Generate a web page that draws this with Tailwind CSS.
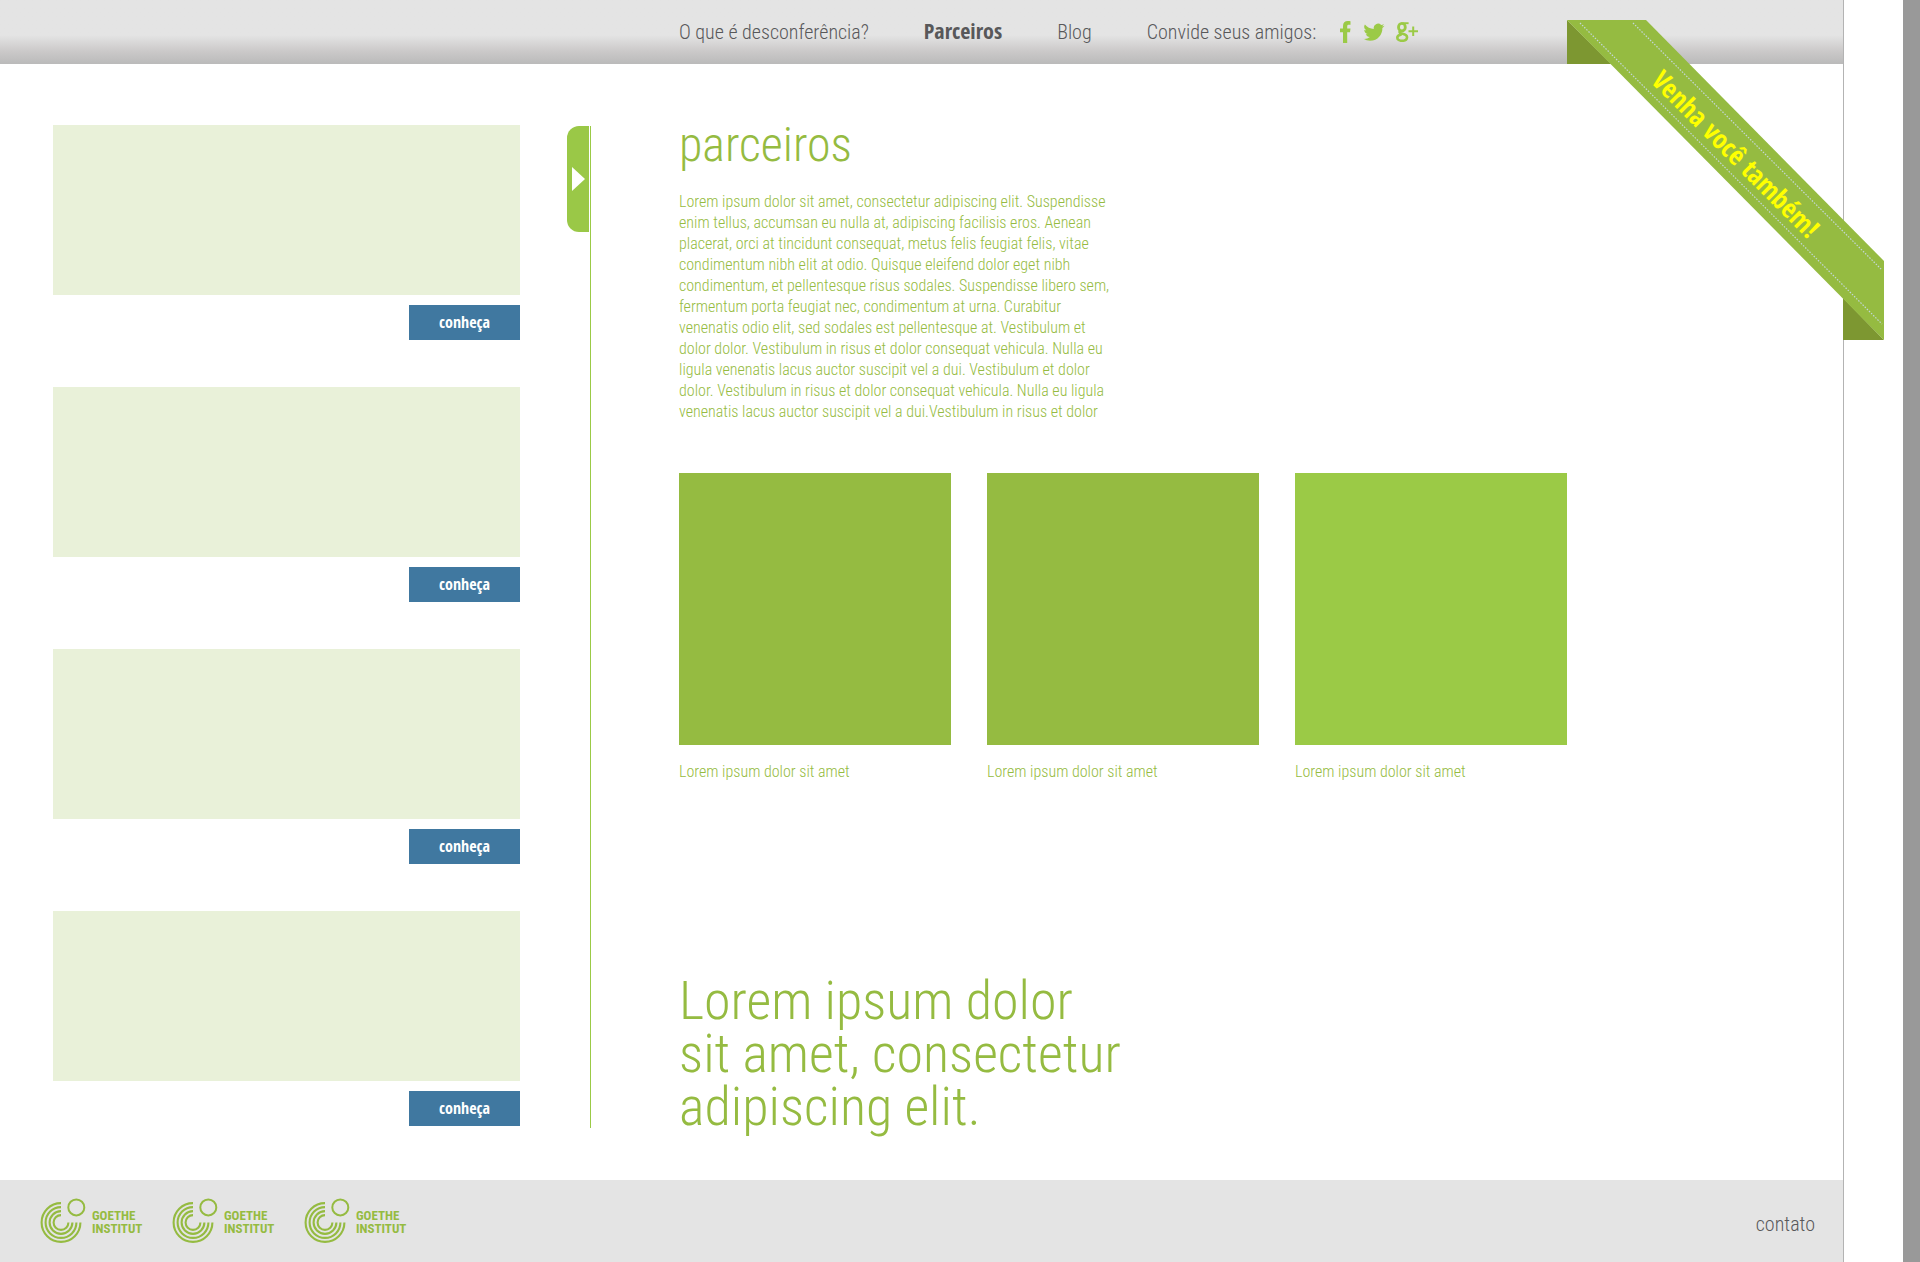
<!DOCTYPE html>
<html lang="pt-BR">
<head>
<meta charset="utf-8">
<meta name="viewport" content="width=device-width, initial-scale=1">
<title>Desconferência - Parceiros</title>
<script src="https://cdn.jsdelivr.net/npm/@tailwindcss/browser@4"></script>
</head>
<body class="flex min-h-screen bg-white font-['Roboto_Condensed',Roboto,sans-serif] font-light text-[#95bb41]">

<svg class="hidden" aria-hidden="true">
  <symbol id="goethe" viewBox="0 0 48 48">
    <g fill="none" stroke="currentColor">
      <g stroke-width="2.1">
        <path d="M21 5.1A19.4 19.4 0 1 0 40.4 24.5"/>
        <path d="M21 9.1A15.4 15.4 0 1 0 36.4 24.5"/>
        <path d="M21 13.1A11.4 11.4 0 1 0 32.4 24.5"/>
        <path d="M21 17.1A7.4 7.4 0 1 0 28.4 24.5"/>
      </g>
      <circle cx="36.3" cy="9.4" r="8" stroke-width="2"/>
    </g>
  </symbol>
</svg>

<div class="relative flex flex-1 flex-col border-r border-[#b3b3b3]">

  <header class="flex h-16 items-center bg-linear-to-b from-[#e4e4e4] from-55% via-[#cbc9c9] via-80% to-[#bababa] pl-[679px] text-xl text-[#58585a]">
    <nav class="flex items-baseline gap-[55px] whitespace-nowrap">
      <a href="#sobre">O que é desconferência?</a>
      <a href="#parceiros" class="font-['Open_Sans_Condensed',Roboto,sans-serif] text-[22px] leading-6 font-bold">Parceiros</a>
      <a href="#blog">Blog</a>
      <span>Convide seus amigos:</span>
    </nav>
    <div class="ml-6 flex items-center gap-[11px] text-[#9bca46]">
      <a href="#facebook" aria-label="Facebook">
        <svg class="h-[22px] w-3" viewBox="0 0 12 22" fill="currentColor"><path d="M3 22V11.3H0V7.4h3V5C3 1.6 4.8 0 7.8 0c1 0 2 .1 2.7.2v3.5H8.8C7.5 3.7 7.2 4.4 7.2 5.4v2h3.3l-.5 3.9H7.2V22z"/></svg>
      </a>
      <a href="#twitter" aria-label="Twitter">
        <svg class="h-[18px] w-[22px]" viewBox="0 1.5 24 20.5" fill="currentColor"><path d="M23.95 4.57a10 10 0 0 1-2.82.77 4.96 4.96 0 0 0 2.16-2.72c-.95.56-2 .95-3.13 1.18a4.92 4.92 0 0 0-8.38 4.48C7.69 8.1 4.07 6.13 1.64 3.16a4.93 4.93 0 0 0 1.52 6.57 4.9 4.9 0 0 1-2.23-.61v.06a4.92 4.92 0 0 0 3.95 4.83 5 5 0 0 1-2.21.08 4.94 4.94 0 0 0 4.6 3.42A9.87 9.87 0 0 1 0 19.54a14 14 0 0 0 7.55 2.21c9.05 0 14-7.5 14-13.98 0-.21 0-.42-.02-.63a9.94 9.94 0 0 0 2.46-2.55z"/></svg>
      </a>
      <a href="#google-plus" aria-label="Google+">
        <svg class="h-5 w-[22px]" viewBox="0 0 22 20" fill="none" stroke="currentColor"><ellipse cx="5.9" cy="5.2" rx="3.4" ry="3.8" stroke-width="2.8"/><path d="M6.5 1.2H12.6" stroke-width="1.9"/><path d="M4.5 8.8C2.5 10.2 4 11.2 6.5 11.8S11.3 13.5 11 15.6 8.5 18.8 6 18.8 1.3 17.7 1.3 15.7 3.4 12.8 5.6 12.4" stroke-width="2.6"/><path d="M12.5 9.2H22M17.2 4.5V14" stroke-width="2"/></svg>
      </a>
    </div>
  </header>

  <div class="flex flex-1 items-start pb-[47px] pl-[53px] pt-[57px]">

    <aside class="mt-1 flex w-[467px] shrink-0 flex-col gap-[47px]">
      <article class="flex flex-col items-end gap-2.5">
        <div class="h-[170px] w-full bg-[#e9f1d9]"></div>
        <button class="h-[35px] w-[111px] bg-[#4078a0] pb-0.5 font-['Open_Sans_Condensed',Roboto,sans-serif] text-base font-bold leading-5 text-white">conheça</button>
      </article>
      <article class="flex flex-col items-end gap-2.5">
        <div class="h-[170px] w-full bg-[#e9f1d9]"></div>
        <button class="h-[35px] w-[111px] bg-[#4078a0] pb-0.5 font-['Open_Sans_Condensed',Roboto,sans-serif] text-base font-bold leading-5 text-white">conheça</button>
      </article>
      <article class="flex flex-col items-end gap-2.5">
        <div class="h-[170px] w-full bg-[#e9f1d9]"></div>
        <button class="h-[35px] w-[111px] bg-[#4078a0] pb-0.5 font-['Open_Sans_Condensed',Roboto,sans-serif] text-base font-bold leading-5 text-white">conheça</button>
      </article>
      <article class="flex flex-col items-end gap-2.5">
        <div class="h-[170px] w-full bg-[#e9f1d9]"></div>
        <button class="h-[35px] w-[111px] bg-[#4078a0] pb-0.5 font-['Open_Sans_Condensed',Roboto,sans-serif] text-base font-bold leading-5 text-white">conheça</button>
      </article>
    </aside>

    <div class="mb-[5px] ml-[47px] mt-[5px] flex shrink-0 self-stretch border-r border-[#9bca46] pr-px">
      <button aria-label="Recolher painel" class="flex h-[106px] w-[22px] items-center justify-center rounded-l-xl bg-[#9ac847]">
        <svg class="h-6 w-[13px]" viewBox="0 0 13 24" fill="#fff"><path d="M0 0L13 12L0 24z"/></svg>
      </button>
    </div>

    <main class="ml-[88px] whitespace-nowrap">
      <h1 class="text-5xl leading-12">parceiros</h1>
      <p class="mt-[22px] text-base leading-[21px]">
        Lorem ipsum dolor sit amet, consectetur adipiscing elit. Suspendisse<br>
        enim tellus, accumsan eu nulla at, adipiscing facilisis eros. Aenean<br>
        placerat, orci at tincidunt consequat, metus felis feugiat felis, vitae<br>
        condimentum nibh elit at odio. Quisque eleifend dolor eget nibh<br>
        condimentum, et pellentesque risus sodales. Suspendisse libero sem,<br>
        fermentum porta feugiat nec, condimentum at urna. Curabitur<br>
        venenatis odio elit, sed sodales est pellentesque at. Vestibulum et<br>
        dolor dolor. Vestibulum in risus et dolor consequat vehicula. Nulla eu<br>
        ligula venenatis lacus auctor suscipit vel a dui. Vestibulum et dolor<br>
        dolor. Vestibulum in risus et dolor consequat vehicula. Nulla eu ligula<br>
        venenatis lacus auctor suscipit vel a dui.Vestibulum in risus et dolor
      </p>
      <div class="mt-[51px] flex gap-9 text-base leading-[21px]">
        <figure class="w-[272px]">
          <div class="h-[272px] bg-[#95bb41]"></div>
          <figcaption class="mt-4">Lorem ipsum dolor sit amet</figcaption>
        </figure>
        <figure class="w-[272px]">
          <div class="h-[272px] bg-[#95bb41]"></div>
          <figcaption class="mt-4">Lorem ipsum dolor sit amet</figcaption>
        </figure>
        <figure class="w-[272px]">
          <div class="h-[272px] bg-[#9bca46]"></div>
          <figcaption class="mt-4">Lorem ipsum dolor sit amet</figcaption>
        </figure>
      </div>
      <h2 class="mt-48 text-[54px] leading-[53px]">Lorem ipsum dolor<br>sit amet, consectetur<br>adipiscing elit.</h2>
    </main>
  </div>

  <footer class="flex h-[82px] items-center justify-between bg-[#e4e4e4] pl-10 pr-7 pt-0.5">
    <div class="flex gap-8 text-[13px] font-bold leading-[13px]">
      <a href="#goethe-1" class="flex w-[100px] items-center gap-1"><svg class="size-12 shrink-0"><use href="#goethe"/></svg><span>GOETHE<br>INSTITUT</span></a>
      <a href="#goethe-2" class="flex w-[100px] items-center gap-1"><svg class="size-12 shrink-0"><use href="#goethe"/></svg><span>GOETHE<br>INSTITUT</span></a>
      <a href="#goethe-3" class="flex w-[100px] items-center gap-1"><svg class="size-12 shrink-0"><use href="#goethe"/></svg><span>GOETHE<br>INSTITUT</span></a>
    </div>
    <a href="#contato" class="pt-1 text-xl text-[#58585a]">contato</a>
  </footer>

  <a href="#participe" class="absolute -right-[41px] top-5">
    <svg class="h-80 w-[317px]" viewBox="0 0 317 320">
      <path d="M0 0V44H44zM276 278V320H317z" fill="#7d9731"/>
      <path d="M0 0H79L317 241V320z" fill="#95bb41"/>
      <path d="M13 3L315 304M66 3L315 250" fill="none" stroke="#c3d7d8" stroke-width="1.2" stroke-dasharray="1.5 1.5"/>
      <text transform="translate(83 62) rotate(45)" font-size="27" class="fill-[#ffff00] font-['Open_Sans_Condensed',Roboto,sans-serif] font-bold">Venha você também!</text>
    </svg>
  </a>
</div>

<div class="w-[59px] shrink-0"></div>
<div class="w-[17px] shrink-0 bg-[#999999]"></div>
</body>
</html>
